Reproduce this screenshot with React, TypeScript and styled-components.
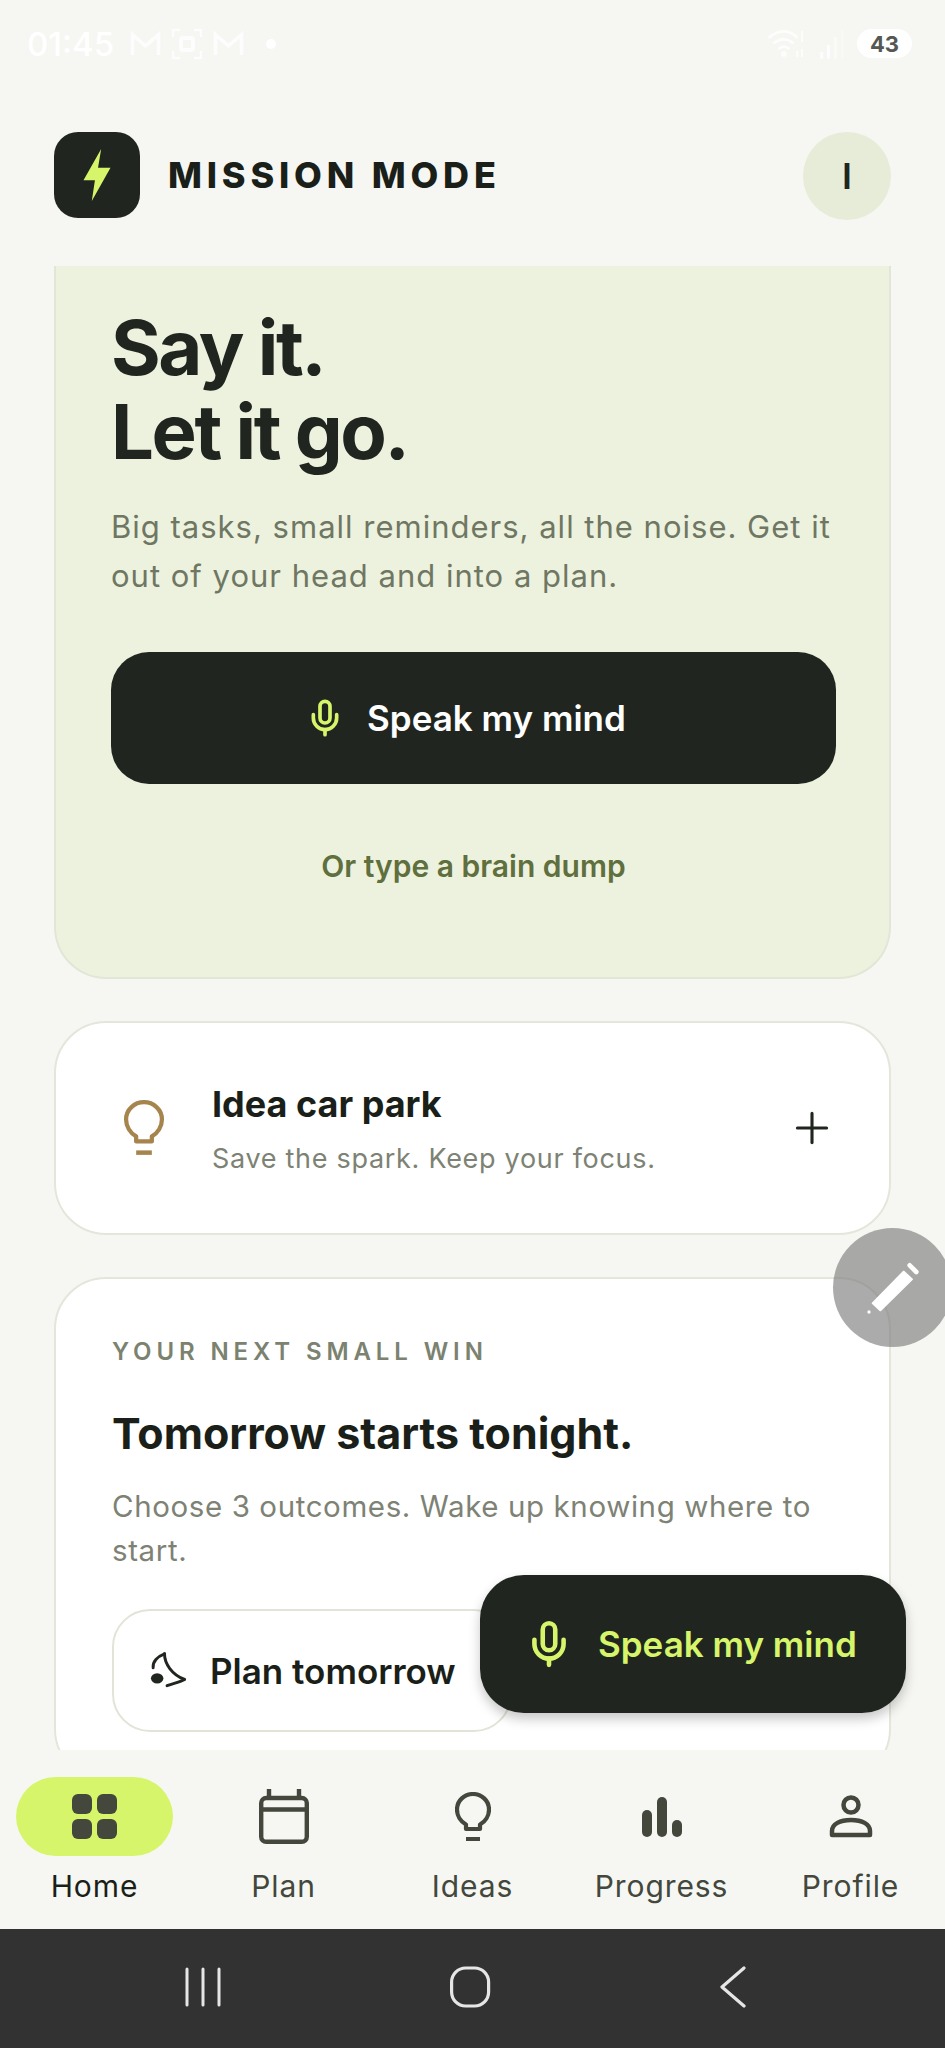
import React from 'react';
import styled, { createGlobalStyle } from 'styled-components';
import { Mic, Plus } from 'lucide-react';

const GlobalStyle = createGlobalStyle`
  html, body {
    margin: 0;
    padding: 0;
    background: #f6f7f3;
  }
  * {
    box-sizing: border-box;
  }
`;

const Screen = styled.div`
  position: relative;
  width: 945px;
  height: 2048px;
  overflow: hidden;
  display: flex;
  flex-direction: column;
  background: #f6f7f3;
  font-family: Inter, 'Liberation Sans', sans-serif;
  color: #1b1f19;
`;

const StatusBar = styled.div`
  height: 132px;
  flex: none;
  display: flex;
  justify-content: space-between;
  align-items: flex-start;
  padding: 29px 33px 0 27px;
  color: #ffffff;
`;

const StatusGroup = styled.div`
  display: flex;
  align-items: center;
  height: 29px;
  gap: 9px;
`;

const StatusIcons = styled(StatusGroup)`
  gap: 12px;
`;

const Clock = styled.span`
  font-size: 33px;
  font-weight: 500;
  margin-right: 6px;
`;

const StatusDot = styled.span`
  width: 10px;
  height: 10px;
  margin-left: 12px;
  border-radius: 50%;
  background: #ffffff;
`;

const Battery = styled.span`
  width: 55px;
  height: 29px;
  border-radius: 15px;
  background: #ffffff;
  color: #555755;
  font-size: 22px;
  font-weight: 700;
  display: flex;
  align-items: center;
  justify-content: center;
`;

const Header = styled.header`
  flex: none;
  height: 134px;
  padding: 0 54px;
  display: flex;
  justify-content: space-between;
  align-items: flex-start;
`;

const Brand = styled.div`
  display: flex;
  align-items: center;
  gap: 28px;
`;

const LogoBox = styled.div`
  width: 86px;
  height: 86px;
  border-radius: 24px;
  background: #20261f;
  display: flex;
  align-items: center;
  justify-content: center;
`;

const BrandName = styled.span`
  font-size: 36px;
  font-weight: 800;
  letter-spacing: 4.8px;
  color: #1b1f19;
`;

const Avatar = styled.div`
  width: 88px;
  height: 88px;
  border-radius: 50%;
  background: #e7ecd9;
  display: flex;
  align-items: center;
  justify-content: center;
  font-size: 36px;
  font-weight: 600;
  color: #20261f;
`;

const Main = styled.main`
  flex: 1;
  min-height: 0;
  overflow: hidden;
  padding: 0 54px;
  display: flex;
  flex-direction: column;
  gap: 42px;
`;

const Hero = styled.section`
  flex: none;
  height: 713px;
  padding: 39px 53px 0 55px;
  background: #edf2df;
  border: 2px solid #e2e6d6;
  border-top: none;
  border-radius: 0 0 52px 52px;
`;

const HeroTitle = styled.h1`
  margin: 0;
  font-size: 76px;
  line-height: 84px;
  font-weight: 700;
  letter-spacing: -2.4px;
  color: #20261f;
`;

const HeroText = styled.p`
  margin: 29px 0 0;
  font-size: 31px;
  line-height: 49px;
  letter-spacing: 1px;
  color: #6f7763;
`;

const SpeakButton = styled.button`
  margin-top: 52px;
  width: 100%;
  height: 132px;
  border: none;
  border-radius: 38px;
  padding: 0 16px 0 0;
  background: #20261f;
  color: #ffffff;
  font-family: inherit;
  font-size: 35px;
  font-weight: 600;
  display: flex;
  align-items: center;
  justify-content: center;
  gap: 22px;
`;

const TypeLink = styled.div`
  margin-top: 62px;
  text-align: center;
  font-size: 30px;
  line-height: 40px;
  font-weight: 600;
  color: #5f6f3d;
`;

const Card = styled.section`
  flex: none;
  background: #ffffff;
  border: 2px solid #e4e6da;
  border-radius: 52px;
`;

const IdeaCard = styled(Card)`
  height: 214px;
  display: flex;
  align-items: center;
  padding: 0 52px 0 67px;
`;

const IdeaText = styled.div`
  flex: 1;
  margin-left: 47px;
  margin-top: -1px;
`;

const IdeaTitle = styled.div`
  font-size: 36px;
  line-height: 50px;
  font-weight: 700;
  color: #1b1f19;
`;

const IdeaSub = styled.div`
  margin-top: 12px;
  font-size: 27px;
  line-height: 36px;
  letter-spacing: 0.7px;
  color: #7d8274;
`;

const WinCard = styled(Card)`
  padding: 58px 56px 47px;
`;

const Eyebrow = styled.div`
  font-size: 24px;
  line-height: 30px;
  font-weight: 600;
  letter-spacing: 4.9px;
  color: #7b8270;
`;

const WinTitle = styled.h2`
  margin: 38px 0 0;
  font-size: 43px;
  line-height: 56px;
  font-weight: 700;
  color: #1b1f19;
`;

const WinText = styled.p`
  margin: 23px 0 0;
  font-size: 29.5px;
  line-height: 44px;
  letter-spacing: 0.6px;
  color: #7d8274;
`;

const PlanButton = styled.button`
  margin-top: 37px;
  width: 400px;
  height: 123px;
  background: #ffffff;
  border: 2px solid #e2e4d8;
  border-radius: 38px;
  color: #1b1f19;
  font-family: inherit;
  font-size: 35px;
  font-weight: 600;
  display: flex;
  align-items: center;
  padding: 0 0 0 34px;
  gap: 18px;
`;

const FloatingSpeak = styled.button`
  position: absolute;
  left: 480px;
  top: 1575px;
  width: 426px;
  height: 138px;
  border: none;
  border-radius: 44px;
  background: #20261f;
  color: #d6f56b;
  font-family: inherit;
  font-size: 35px;
  font-weight: 600;
  display: flex;
  align-items: center;
  padding-left: 44px;
  gap: 24px;
  box-shadow: 0 6px 12px rgba(0, 0, 0, 0.22);
`;

const EditBubble = styled.div`
  position: absolute;
  left: 833px;
  top: 1228px;
  width: 119px;
  height: 119px;
  border-radius: 50%;
  background: rgba(120, 120, 120, 0.62);
  display: flex;
  align-items: center;
  justify-content: center;
`;

const BottomNav = styled.nav`
  flex: none;
  height: 179px;
  padding-top: 27px;
  background: #f6f7f3;
  display: grid;
  grid-template-columns: repeat(5, 1fr);
`;

const NavItem = styled.div`
  display: flex;
  flex-direction: column;
  align-items: center;
`;

const NavIcon = styled.div<{ $active?: boolean }>`
  width: 157px;
  height: 79px;
  border-radius: 40px;
  background: ${props => (props.$active ? '#d6f56b' : 'transparent')};
  display: flex;
  align-items: center;
  justify-content: center;
  color: #43473c;
`;

const NavLabel = styled.span<{ $active?: boolean }>`
  margin-top: 12px;
  font-size: 30px;
  line-height: 36px;
  letter-spacing: 0.9px;
  font-weight: 400;
  color: ${props => (props.$active ? '#1b1f19' : '#43473c')};
`;

const SystemNav = styled.div`
  flex: none;
  height: 119px;
  background: #323232;
  display: flex;
  align-items: center;
  justify-content: space-between;
  color: #e6e6e6;
  padding: 0 198px 3px 184px;
`;

const BoltIcon = () => (
  <svg width="32" height="54" viewBox="0 0 30 52">
    <path d="M19 1 L2 31 H13 L10 51 L28 19 H16 Z" fill="#d6f56b" />
  </svg>
);

const GmailIcon = () => (
  <svg width="33" height="26" viewBox="0 0 34 28" fill="none" stroke="#fff" strokeWidth="4" opacity="0.85">
    <path d="M3 26V4l14 12L31 4v22" />
  </svg>
);

const ScanIcon = () => (
  <svg width="32" height="34" viewBox="0 0 32 32" fill="none" stroke="#fff" strokeWidth="2.5" opacity="0.85">
    <path d="M2 9V2h7M23 2h7v7M30 23v7h-7M9 30H2v-7" />
    <rect x="10" y="10" width="12" height="12" rx="2" strokeWidth="4" />
  </svg>
);

const WifiIcon = () => (
  <svg width="40" height="31" viewBox="0 0 50 38" fill="none" stroke="#fff" strokeWidth="3.5" opacity="0.85">
    <path d="M2 12c12-11 26-11 36 0M8 19c8-7 18-7 25 0M14 26c5-4 10-4 14 0" />
    <circle cx="21" cy="32" r="3.5" fill="#fff" stroke="none" />
    <path d="M44 3v14M38 28v8M44 26v10" strokeWidth="2.5" />
  </svg>
);

const SignalIcon = () => (
  <svg width="26" height="30" viewBox="0 0 30 34" fill="#fff" opacity="0.85">
    <rect x="1" y="26" width="4" height="8" />
    <rect x="9" y="18" width="4" height="16" />
    <rect x="17" y="9" width="4" height="25" opacity="0.6" />
    <rect x="25" y="1" width="4" height="33" opacity="0.35" />
  </svg>
);

const MoonIcon = () => (
  <svg width="44" height="48" viewBox="60 60 120 130" fill="none" stroke="#20261f" strokeWidth="8" strokeLinecap="round" strokeLinejoin="round">
    <path d="M105 78C86 85 72 100 74 116" />
    <path d="M105 78C105 105 125 135 160 148C148 155 130 158 112 165" />
    <ellipse cx="85" cy="145" rx="17" ry="14" fill="#20261f" stroke="none" />
  </svg>
);

const PencilIcon = () => (
  <svg width="62" height="62" viewBox="97 97 186 186" fill="#ffffff" stroke="#ffffff">
    <path d="M222 140 L248 164 L152 258 L128 236 Z" strokeWidth="4" strokeLinejoin="round" />
    <path d="M240 122 L260 142" strokeWidth="14" strokeLinecap="round" />
    <circle cx="118" cy="262" r="5" stroke="none" />
  </svg>
);

const GridIcon = () => (
  <svg width="46" height="46" viewBox="0 0 46 46" fill="currentColor">
    <rect x="0" y="0" width="20" height="20" rx="6" />
    <rect x="25" y="0" width="20" height="20" rx="6" />
    <rect x="0" y="25" width="20" height="20" rx="6" />
    <rect x="25" y="25" width="20" height="20" rx="6" />
  </svg>
);

const CalendarIcon = () => (
  <svg width="50" height="55" viewBox="0 0 50 55" fill="none" stroke="currentColor" strokeWidth="4.4">
    <rect x="2.2" y="9" width="45.6" height="43.8" rx="5" />
    <path d="M2 20.5h46M10 0v9M40 0v9" />
  </svg>
);

const BulbIcon = ({ width, height, color, weight }: { width: number; height: number; color?: string; weight: number }) => (
  <svg width={width} height={height} viewBox="0 0 36 50" fill="none" stroke={color ?? 'currentColor'} strokeWidth={weight} strokeLinejoin="round">
    <path d="M11 37V32.5C5.5 29.5 2 23.5 2 17.5C2 8.5 9.5 2 18 2C26.5 2 34 8.5 34 17.5C34 23.5 30.5 29.5 25 32.5V37Z" />
    <rect x="11" y="45" width="14" height="4" fill={color ?? 'currentColor'} stroke="none" />
  </svg>
);

const BarsIcon = () => (
  <svg width="42" height="42" viewBox="0 0 42 42" fill="currentColor">
    <rect x="1" y="14" width="10" height="27" rx="5" />
    <rect x="16" y="1" width="10" height="40" rx="5" />
    <rect x="31" y="24" width="10" height="17" rx="5" />
  </svg>
);

const PersonIcon = () => (
  <svg width="44" height="44" viewBox="0 0 44 44" fill="none" stroke="currentColor" strokeWidth="4.5">
    <circle cx="22" cy="10" r="7.5" />
    <path d="M3 40v-4c0-7 8-11 19-11s19 4 19 11v4z" strokeLinejoin="round" />
  </svg>
);

const RecentsIcon = () => (
  <svg width="38" height="40" viewBox="0 0 38 40" stroke="currentColor" strokeWidth="3" strokeLinecap="round">
    <path d="M3 2v36M19 2v36M35 2v36" />
  </svg>
);

const HomeKeyIcon = () => (
  <svg width="42" height="42" viewBox="0 0 42 42" fill="none" stroke="currentColor" strokeWidth="3.2">
    <rect x="1.6" y="2" width="37" height="38" rx="14" />
  </svg>
);

const BackIcon = () => (
  <svg width="28" height="42" viewBox="0 0 28 42" fill="none" stroke="currentColor" strokeWidth="3.2" strokeLinecap="round" strokeLinejoin="round">
    <path d="M25 2 L3 21 L25 40" />
  </svg>
);

const navItems = [
  { label: 'Home', icon: <GridIcon />, active: true },
  { label: 'Plan', icon: <CalendarIcon /> },
  { label: 'Ideas', icon: <BulbIcon width={36} height={50} weight={4.2} /> },
  { label: 'Progress', icon: <BarsIcon /> },
  { label: 'Profile', icon: <PersonIcon /> },
];

export default function App() {
  return (
    <Screen>
      <GlobalStyle />
      <StatusBar>
        <StatusGroup>
          <Clock>01:45</Clock>
          <GmailIcon />
          <ScanIcon />
          <GmailIcon />
          <StatusDot />
        </StatusGroup>
        <StatusIcons>
          <WifiIcon />
          <SignalIcon />
          <Battery>43</Battery>
        </StatusIcons>
      </StatusBar>

      <Header>
        <Brand>
          <LogoBox>
            <BoltIcon />
          </LogoBox>
          <BrandName>MISSION MODE</BrandName>
        </Brand>
        <Avatar>I</Avatar>
      </Header>

      <Main>
        <Hero>
          <HeroTitle>
            Say it.
            <br />
            Let it go.
          </HeroTitle>
          <HeroText>Big tasks, small reminders, all the noise. Get it out of your head and into a plan.</HeroText>
          <SpeakButton>
            <Mic size={40} color="#d6f56b" strokeWidth={2.2} />
            Speak my mind
          </SpeakButton>
          <TypeLink>Or type a brain dump</TypeLink>
        </Hero>

        <IdeaCard>
          <BulbIcon width={42} height={56} color="#a5854d" weight={3.8} />
          <IdeaText>
            <IdeaTitle>Idea car park</IdeaTitle>
            <IdeaSub>Save the spark. Keep your focus.</IdeaSub>
          </IdeaText>
          <Plus size={50} color="#20261f" strokeWidth={1.5} />
        </IdeaCard>

        <WinCard>
          <Eyebrow>YOUR NEXT SMALL WIN</Eyebrow>
          <WinTitle>Tomorrow starts tonight.</WinTitle>
          <WinText>Choose 3 outcomes. Wake up knowing where to start.</WinText>
          <PlanButton>
            <MoonIcon />
            Plan tomorrow
          </PlanButton>
        </WinCard>
      </Main>

      <BottomNav>
        {navItems.map(item => (
          <NavItem key={item.label}>
            <NavIcon $active={item.active}>{item.icon}</NavIcon>
            <NavLabel $active={item.active}>{item.label}</NavLabel>
          </NavItem>
        ))}
      </BottomNav>

      <SystemNav>
        <RecentsIcon />
        <HomeKeyIcon />
        <BackIcon />
      </SystemNav>

      <EditBubble>
        <PencilIcon />
      </EditBubble>
      <FloatingSpeak>
        <Mic size={50} strokeWidth={2.2} />
        Speak my mind
      </FloatingSpeak>
    </Screen>
  );
}
